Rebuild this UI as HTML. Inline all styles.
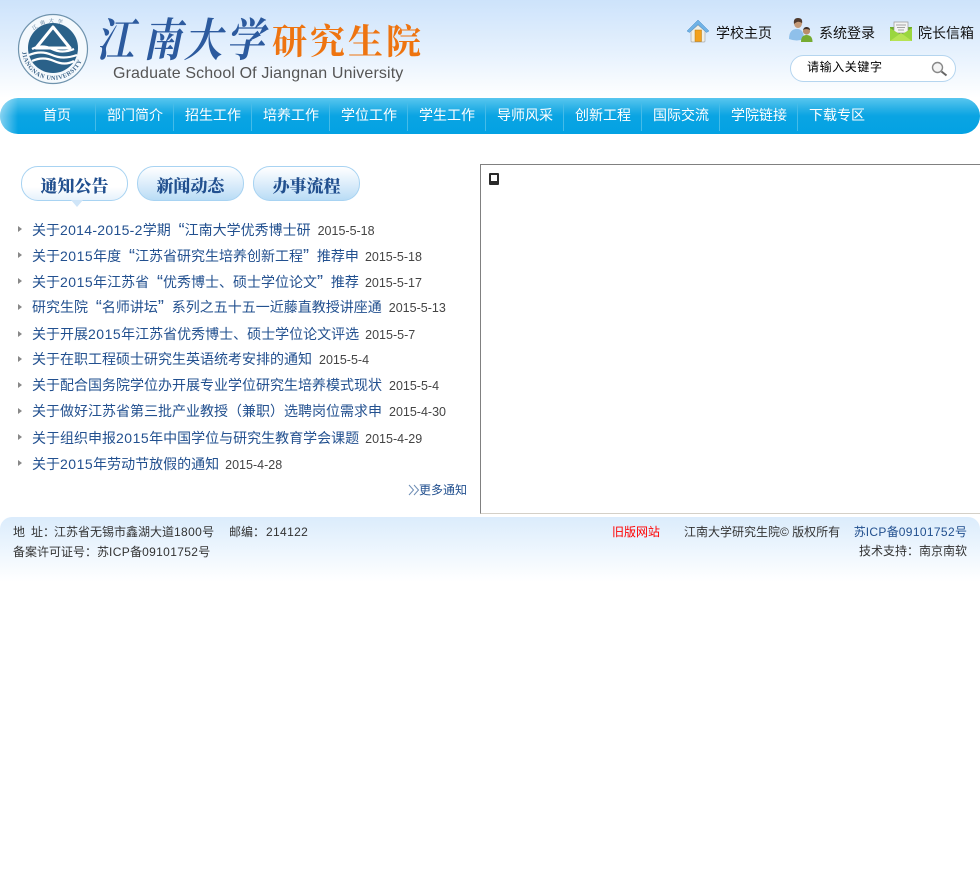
<!DOCTYPE html>
<html lang="zh"><head><meta charset="utf-8"><title>江南大学研究生院</title>
<style>
html,body{margin:0;padding:0;background:#fff}
body{width:980px;height:891px;position:relative;overflow:hidden;font-family:"Liberation Sans","WenQuanYi Zen Hei","Noto Sans CJK SC",sans-serif;color:#333}
.a{position:absolute;white-space:nowrap}
#hd{left:0;top:0;width:980px;height:98px;background:linear-gradient(#cde3fb,#e4f0fd 50%,#fff)}
#nav{left:0;top:98px;width:980px;height:36px;border-radius:18px;background:linear-gradient(#58c6ef 0,#28b0e6 30%,#0aa4e3 50%,#03a2e3 100%);overflow:hidden}
#nav:before{content:"";position:absolute;left:0;top:0;width:18px;height:36px;background:linear-gradient(90deg,rgba(255,255,255,.5),rgba(255,255,255,0))}
.n{position:absolute;top:98px;height:36px;line-height:34px;width:78px;text-align:center;color:#fff;font-size:14px}
.s{position:absolute;top:103px;height:28px;width:1px;background:#45bbe8}
.tab{position:absolute;top:166px;width:107px;height:35px;border-radius:17px;border:1px solid #a8d3f2;box-sizing:border-box;text-align:center;font:900 17px/40px "Liberation Serif","Noto Serif CJK SC",serif;color:#22508f;background:linear-gradient(#fff,#d6eafa 60%,#b9dcf5)}
.li{position:absolute;left:32px;font-size:14px;line-height:16px;color:#22508f;white-space:nowrap}
.li span{color:#444;font-size:12.5px;margin-left:6px}
.li span.m{margin-left:7px}
.li b{font-weight:normal;letter-spacing:.5px}
.li i{font-style:normal;display:inline-block;width:10px;font-size:18px;line-height:0;vertical-align:-1px}
.q1{text-align:right}
.ar{position:absolute;left:18px;width:0;height:0;border-left:4px solid #888;border-top:3px solid transparent;border-bottom:3px solid transparent}
.top{font-size:14px;color:#111;line-height:16px}
.ft{font-size:12px;line-height:14px;color:#333}
.ft b{font-weight:normal;letter-spacing:.35px}
.js{position:absolute;top:12px;font:700 38px/50px "Noto Serif CJK SC",serif;color:#2c5a9e;transform-origin:0 50%;transform:scale(1,1.2) skewX(-14deg)}
</style></head><body>
<div class="a" id="hd"></div>

<svg class="a" style="left:17px;top:13px" width="72" height="72" viewBox="0 0 72 72">
<defs><path id="b1" d="M5 36 A31 31 0 0 0 67 36"/><path id="t1" d="M12 24 A27 27 0 0 1 60 24"/></defs>
<circle cx="36" cy="36" r="34.5" fill="#f4f9fd" stroke="#6f93ad" stroke-width="1.2"/>
<circle cx="36" cy="35" r="25" fill="#2a6189"/>
<path d="M36 14 L53 35 L19 35Z" fill="none" stroke="#fff" stroke-width="3" stroke-linejoin="round"/>
<path d="M15 36 Q25 31 35 36 T57 36 M12 42 Q24 37 35 42 T60 42 M15 48 Q26 43 37 48 T57 48" fill="none" stroke="#fff" stroke-width="2.2"/>
<text font-family="Liberation Serif,serif" font-weight="bold" font-size="6.2" fill="#3f668a" letter-spacing=".5"><textPath href="#b1" startOffset="3%">JIANGNAN UNIVERSITY</textPath></text>
<text font-family="Noto Serif CJK SC,serif" font-size="5" fill="#3f668a" letter-spacing="3.5"><textPath href="#t1" startOffset="14%">江南大学</textPath></text>
</svg>

<div class="js" style="left:100px">江</div>
<div class="js" style="left:147px">南</div>
<div class="js" style="left:188px">大</div>
<div class="js" style="left:230px">学</div>
<div class="a" style="left:272px;top:15px;font:bold 35px/50px 'Noto Serif CJK SC',serif;color:#ee7410;letter-spacing:3px">研究生院</div>
<div class="a" style="left:113px;top:66px;font-size:16px;line-height:16px;color:#555;letter-spacing:.13px">Graduate School Of Jiangnan University</div>

<svg class="a" style="left:686px;top:19px" width="24" height="24" viewBox="0 0 24 24"><path d="M5 12 L12 6 L19 12 V22 Q19 23 18 23 H6 Q5 23 5 22Z" fill="#efefe6" stroke="#aaa" stroke-width=".7"/><path d="M1 12 L12 1 L23 12 L20.5 13.5 L12 5.5 L3.5 13.5Z" fill="#6fb2e6" stroke="#4b8fc8" stroke-width=".5"/><rect x="9" y="11" width="6.5" height="11.5" fill="#f3a11b" stroke="#b87a10" stroke-width=".5"/></svg>
<div class="a top" style="left:716px;top:25px">学校主页</div>
<svg class="a" style="left:788px;top:18px" width="26" height="25" viewBox="0 0 26 25"><path d="M1 21 Q1 11 9 11 Q16 11 16 21 Q9 24 1 21Z" fill="#8fc0ea"/><path d="M6 6 Q6 1 10 1 Q15 1 14 6 Q13 10 10 10 Q7 10 6 6Z" fill="#c49a78"/><path d="M6 6 Q5 0 10 0 Q15 0 14 5 Q10 2 6 6Z" fill="#4f3a2e"/><circle cx="18.5" cy="13" r="3.6" fill="#b98d6a"/><path d="M15 12 Q16 8.5 19 9 Q22 9.5 22 12 Q18 10 15 12Z" fill="#3f3028"/><path d="M13 24 Q13 17 18.5 17 Q24.5 17 24.5 24Z" fill="#76ab32"/></svg>
<div class="a top" style="left:819px;top:25px">系统登录</div>
<svg class="a" style="left:890px;top:21px" width="23" height="21" viewBox="0 0 23 21"><rect x="0" y="6" width="22" height="14" fill="#6fae2a"/><path d="M4 1H18V12H4Z" fill="#f4f4f4" stroke="#999" stroke-width=".7"/><path d="M6 4H16M7 6.5H15M8 9H14" stroke="#888" stroke-width=".8"/><path d="M0 7 L11 14 L22 7 V20 H0Z" fill="#9ad63f"/><path d="M0 20 L11 12 L22 20Z" fill="#b6e354"/></svg>
<div class="a top" style="left:918px;top:25px">院长信箱</div>

<div class="a" style="left:790px;top:55px;width:166px;height:27px;box-sizing:border-box;border:1px solid #b5d5ef;border-radius:14px;background:#fff"></div>
<div class="a" style="left:807px;top:60px;font-size:12px;line-height:14px;color:#000;letter-spacing:.6px">请输入关键字</div>
<svg class="a" style="left:930px;top:60px" width="18" height="18" viewBox="0 0 18 18"><circle cx="7.5" cy="7.5" r="5" fill="#f4f4f4" stroke="#888" stroke-width="1.4"/><path d="M11.5 11.5 L16.5 15.5" stroke="#666" stroke-width="2"/></svg>

<div class="a" id="nav"></div>
<div class="n" style="left:18px">首页</div><div class="s" style="left:95px"></div>
<div class="n" style="left:96px">部门简介</div><div class="s" style="left:173px"></div>
<div class="n" style="left:174px">招生工作</div><div class="s" style="left:251px"></div>
<div class="n" style="left:252px">培养工作</div><div class="s" style="left:329px"></div>
<div class="n" style="left:330px">学位工作</div><div class="s" style="left:407px"></div>
<div class="n" style="left:408px">学生工作</div><div class="s" style="left:485px"></div>
<div class="n" style="left:486px">导师风采</div><div class="s" style="left:563px"></div>
<div class="n" style="left:564px">创新工程</div><div class="s" style="left:641px"></div>
<div class="n" style="left:642px">国际交流</div><div class="s" style="left:719px"></div>
<div class="n" style="left:720px">学院链接</div><div class="s" style="left:797px"></div>
<div class="n" style="left:798px">下载专区</div>

<div class="tab" style="left:21px;background:linear-gradient(#fff,#fff 60%,#e6f2fc)">通知公告</div>
<div class="a" style="left:71px;top:200px;width:0;height:0;border-left:6px solid transparent;border-right:6px solid transparent;border-top:7px solid #cfe5f8"></div>
<div class="tab" style="left:137px">新闻动态</div>
<div class="tab" style="left:253px">办事流程</div>

<div class="ar" style="top:226px"></div><div class="li" style="top:222px">关于<b style="letter-spacing:.3px">2014-2015-2</b>学期 <i class="q1">“</i>江南大学优秀博士研<span class="m">2015-5-18</span></div>
<div class="ar" style="top:252px"></div><div class="li" style="top:248px">关于<b>2015</b>年度 <i class="q1">“</i>江苏省研究生培养创新工程<i>”</i> 推荐申<span>2015-5-18</span></div>
<div class="ar" style="top:278px"></div><div class="li" style="top:274px">关于<b>2015</b>年江苏省 <i class="q1">“</i>优秀博士、硕士学位论文<i>”</i> 推荐<span>2015-5-17</span></div>
<div class="ar" style="top:304px"></div><div class="li" style="top:299px">研究生院 <i class="q1">“</i>名师讲坛<i>”</i> 系列之五十五一近藤直教授讲座通<span class="m">2015-5-13</span></div>
<div class="ar" style="top:331px"></div><div class="li" style="top:326px">关于开展<b>2015</b>年江苏省优秀博士、硕士学位论文评选<span>2015-5-7</span></div>
<div class="ar" style="top:356px"></div><div class="li" style="top:351px">关于在职工程硕士研究生英语统考安排的通知<span class="m">2015-5-4</span></div>
<div class="ar" style="top:382px"></div><div class="li" style="top:377px">关于配合国务院学位办开展专业学位研究生培养模式现状<span class="m">2015-5-4</span></div>
<div class="ar" style="top:408px"></div><div class="li" style="top:403px">关于做好江苏省第三批产业教授（兼职）选聘岗位需求申<span class="m">2015-4-30</span></div>
<div class="ar" style="top:434px"></div><div class="li" style="top:430px">关于组织申报<b>2015</b>年中国学位与研究生教育学会课题<span>2015-4-29</span></div>
<div class="ar" style="top:460px"></div><div class="li" style="top:456px">关于<b>2015</b>年劳动节放假的通知<span>2015-4-28</span></div>

<svg class="a" style="left:408px;top:484px" width="12" height="12" viewBox="0 0 12 12"><path d="M1 1 L5.5 6 L1 11 M6 1 L10.5 6 L6 11" fill="none" stroke="#6d8db5" stroke-width="1"/></svg>
<div class="a" style="left:419px;top:483px;font-size:12px;line-height:14px;color:#22508f">更多通知</div>

<div class="a" style="left:480px;top:164px;width:500px;height:350px;box-sizing:border-box;border-left:1px solid #808080;border-top:1px solid #808080;border-bottom:1px solid #d4d0c8"></div>
<div class="a" style="left:489px;top:173px;width:6px;height:6px;border:2px solid #2a2a2a;border-bottom-width:4px;border-radius:1px;background:#fff"></div>

<div class="a" style="left:0;top:517px;width:980px;height:65px;border-radius:12px 12px 0 0;background:linear-gradient(#dbecfc,#fff)"></div>
<div class="a ft" style="left:13px;top:525px">地</div>
<div class="a ft" style="left:31px;top:525px">址：</div>
<div class="a ft" style="left:54px;top:525px">江苏省无锡市鑫湖大道<b>1800</b>号</div>
<div class="a ft" style="left:229px;top:525px">邮编：</div>
<div class="a ft" style="left:266px;top:525px"><b>214122</b></div>
<div class="a ft" style="left:13px;top:545px">备案许可证号：苏<b>ICP</b>备<b>09101752</b>号</div>
<div class="a ft" style="left:612px;top:525px;color:#f00">旧版网站</div>
<div class="a ft" style="left:684px;top:525px">江南大学研究生院© 版权所有</div>
<div class="a ft" style="right:13px;top:525px;color:#22508f">苏<b>ICP</b>备<b>09101752</b>号</div>
<div class="a ft" style="right:13px;top:544px">技术支持：南京南软</div>
</body></html>
